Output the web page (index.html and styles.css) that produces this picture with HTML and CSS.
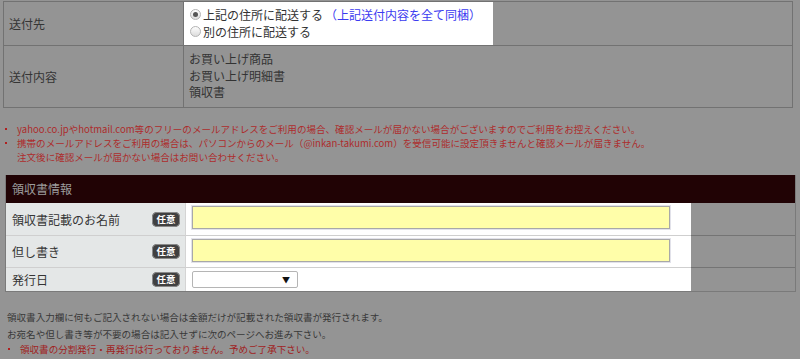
FILE: index.html
```html
<!DOCTYPE html>
<html lang="ja">
<head>
<meta charset="utf-8">
<title>送付先</title>
<link rel="stylesheet" href="styles.css">
</head>
<body>
<div class="page">
  <div class="ship">
    <div class="ship-row r1">
      <div class="ship-th">送付先</div>
      <div class="ship-td">
        <div class="spot">
          <div class="radio-line"><span class="radio on"></span>上記の住所に配送する<span class="blue">（上記送付内容を全て同梱）</span></div>
          <div class="radio-line"><span class="radio"></span>別の住所に配送する</div>
        </div>
      </div>
    </div>
    <div class="ship-row r2">
      <div class="ship-th">送付内容</div>
      <div class="ship-td items">お買い上げ商品<br>お買い上げ明細書<br>領収書</div>
    </div>
  </div>

  <ul class="notes">
    <li>yahoo.co.jpやhotmail.com等のフリーのメールアドレスをご利用の場合、確認メールが届かない場合がございますのでご利用をお控えください。</li>
    <li>携帯のメールアドレスをご利用の場合は、パソコンからのメール（@inkan-takumi.com）を受信可能に設定頂きませんと確認メールが届きません。<br>注文後に確認メールが届かない場合はお問い合わせください。</li>
  </ul>

  <section class="receipt">
    <h2 class="receipt-head">領収書情報</h2>
    <div class="frow fr1">
      <div class="flabel"><span>領収書記載のお名前</span><span class="badge">任意</span></div>
      <div class="fcell"><div class="text-input"></div></div>
      <div class="fspace"></div>
    </div>
    <div class="frow fr2">
      <div class="flabel"><span>但し書き</span><span class="badge">任意</span></div>
      <div class="fcell"><div class="text-input"></div></div>
      <div class="fspace"></div>
    </div>
    <div class="frow fr3">
      <div class="flabel"><span>発行日</span><span class="badge">任意</span></div>
      <div class="fcell"><div class="select"><span class="arrow">▼</span></div></div>
      <div class="fspace"></div>
    </div>
  </section>

  <p class="after">領収書入力欄に何もご記入されない場合は金額だけが記載された領収書が発行されます。<br>お宛名や但し書き等が不要の場合は記入せずに次のページへお進み下さい。</p>
  <ul class="notes2">
    <li>領収書の分割発行・再発行は行っておりません。予めご了承下さい。</li>
  </ul>
</div>
</body>
</html>
```

FILE: styles.css
```css
html, body {
  margin: 0;
  padding: 0;
}
body {
  background: #949494;
  font-family: "Noto Sans CJK JP", "Noto Sans", sans-serif;
  color: #333;
  width: 800px;
  height: 359px;
  overflow: hidden;
}
.page {
  padding-top: 1px;
}

/* top table */
.ship {
  margin-left: 3px;
  width: 790px;
  box-sizing: border-box;
  border: 1px solid #727272;
}
.ship-row {
  display: grid;
  grid-template-columns: 180px 1fr;
}
.ship-row.r1 {
  height: 43px;
  border-bottom: 1px solid #727272;
}
.ship-row.r2 {
  height: 61px;
}
.ship-th {
  border-right: 1px solid #727272;
  font-size: 12px;
  line-height: 16px;
  padding-left: 5px;
  display: flex;
  align-items: center;
  color: #353535;
}
.spot {
  background: #fff;
  width: 309px;
  height: 43px;
  box-sizing: border-box;
  padding-top: 4px;
  padding-left: 6px;
}
.radio-line {
  display: flex;
  align-items: center;
  font-size: 12px;
  line-height: 17px;
  height: 17px;
  color: #333;
  white-space: nowrap;
}
.radio {
  width: 11px;
  height: 11px;
  box-sizing: border-box;
  border-radius: 50%;
  border: 1px solid #b4b4b4;
  background: linear-gradient(#fdfdfd, #dcdcdc);
  margin-right: 2px;
  position: relative;
}
.radio.on::after {
  content: "";
  position: absolute;
  left: 2px;
  top: 2px;
  width: 5px;
  height: 5px;
  border-radius: 50%;
  background: #555;
}
.blue {
  color: #3b3bf0;
  margin-left: 2px;
}
.items {
  font-size: 12px;
  line-height: 16.5px;
  padding: 5px 0 0 5px;
  color: #333;
}

/* notes */
.notes {
  list-style: none;
  margin: 14px 0 0;
  padding: 0 0 0 17px;
  font-size: 9.55px;
  line-height: 14px;
  color: #ad2c2c;
}
.notes li,
.notes2 li {
  position: relative;
}
.notes li::before,
.notes2 li::before {
  content: "";
  position: absolute;
  left: -12px;
  top: 6px;
  width: 2px;
  height: 2px;
  background: #b02020;
}

/* receipt form */
.receipt {
  margin: 11px 0 0 5px;
  width: 791px;
  box-sizing: border-box;
  border: 1px solid #7a7a7a;
  border-top: 0;
}
.receipt-head {
  margin: 0;
  height: 28px;
  background: #210305;
  color: #9c9c9c;
  font-size: 12px;
  font-weight: normal;
  line-height: 28px;
  padding-left: 6px;
}
.frow {
  display: grid;
  grid-template-columns: 180px 505px 1fr;
}
.fr1 { height: 33px; }
.fr2 { height: 32px; }
.fr3 { height: 23px; }
.fr1 > div, .fr2 > div {
  border-bottom: 1px solid #cfcfcf;
  box-sizing: border-box;
}
.fr1 > .fspace, .fr2 > .fspace {
  border-bottom-color: #747474;
}
.flabel {
  background: #e4e7e7;
  border-right: 1px solid #d4d4d4;
  display: flex;
  align-items: center;
  justify-content: space-between;
  padding: 0 5px 0 6px;
  font-size: 12px;
  color: #353535;
}
.badge {
  background: #404040;
  color: #fff;
  font-size: 9.5px;
  font-weight: bold;
  line-height: 15px;
  height: 15px;
  width: 28px;
  text-align: center;
  border-radius: 5px;
  box-shadow: 0 0 0 1px #8a8a8a inset;
}
.fcell {
  background: #fff;
  display: flex;
  align-items: center;
  padding-left: 6px;
}
.fspace {
  background: #949494;
}
.text-input {
  width: 478px;
  height: 23px;
  box-sizing: border-box;
  background: #fffea9;
  border: 1px solid #a8a8a8;
  box-shadow: 0 0 0 1px #e2e2ea;
}
.fr1 .text-input { margin-top: -3px; }
.fr2 .text-input { margin-top: -2px; }
.select {
  width: 106px;
  height: 17px;
  box-sizing: border-box;
  border: 1px solid #b5b5b5;
  border-radius: 2px;
  background: #fff;
  display: flex;
  justify-content: flex-end;
  align-items: center;
  padding-right: 7px;
}
.arrow {
  font-size: 8px;
  color: #111;
  line-height: 8px;
}

/* bottom notes */
.after {
  margin: 17px 0 0;
  padding-left: 7px;
  font-size: 9.55px;
  line-height: 17px;
  color: #383838;
}
.notes2 {
  list-style: none;
  margin: 0;
  padding: 0 0 0 20px;
  font-size: 9.55px;
  line-height: 12px;
  color: #a02222;
}
.notes2 li::before {
  left: -12px;
  top: 5px;
}
```
